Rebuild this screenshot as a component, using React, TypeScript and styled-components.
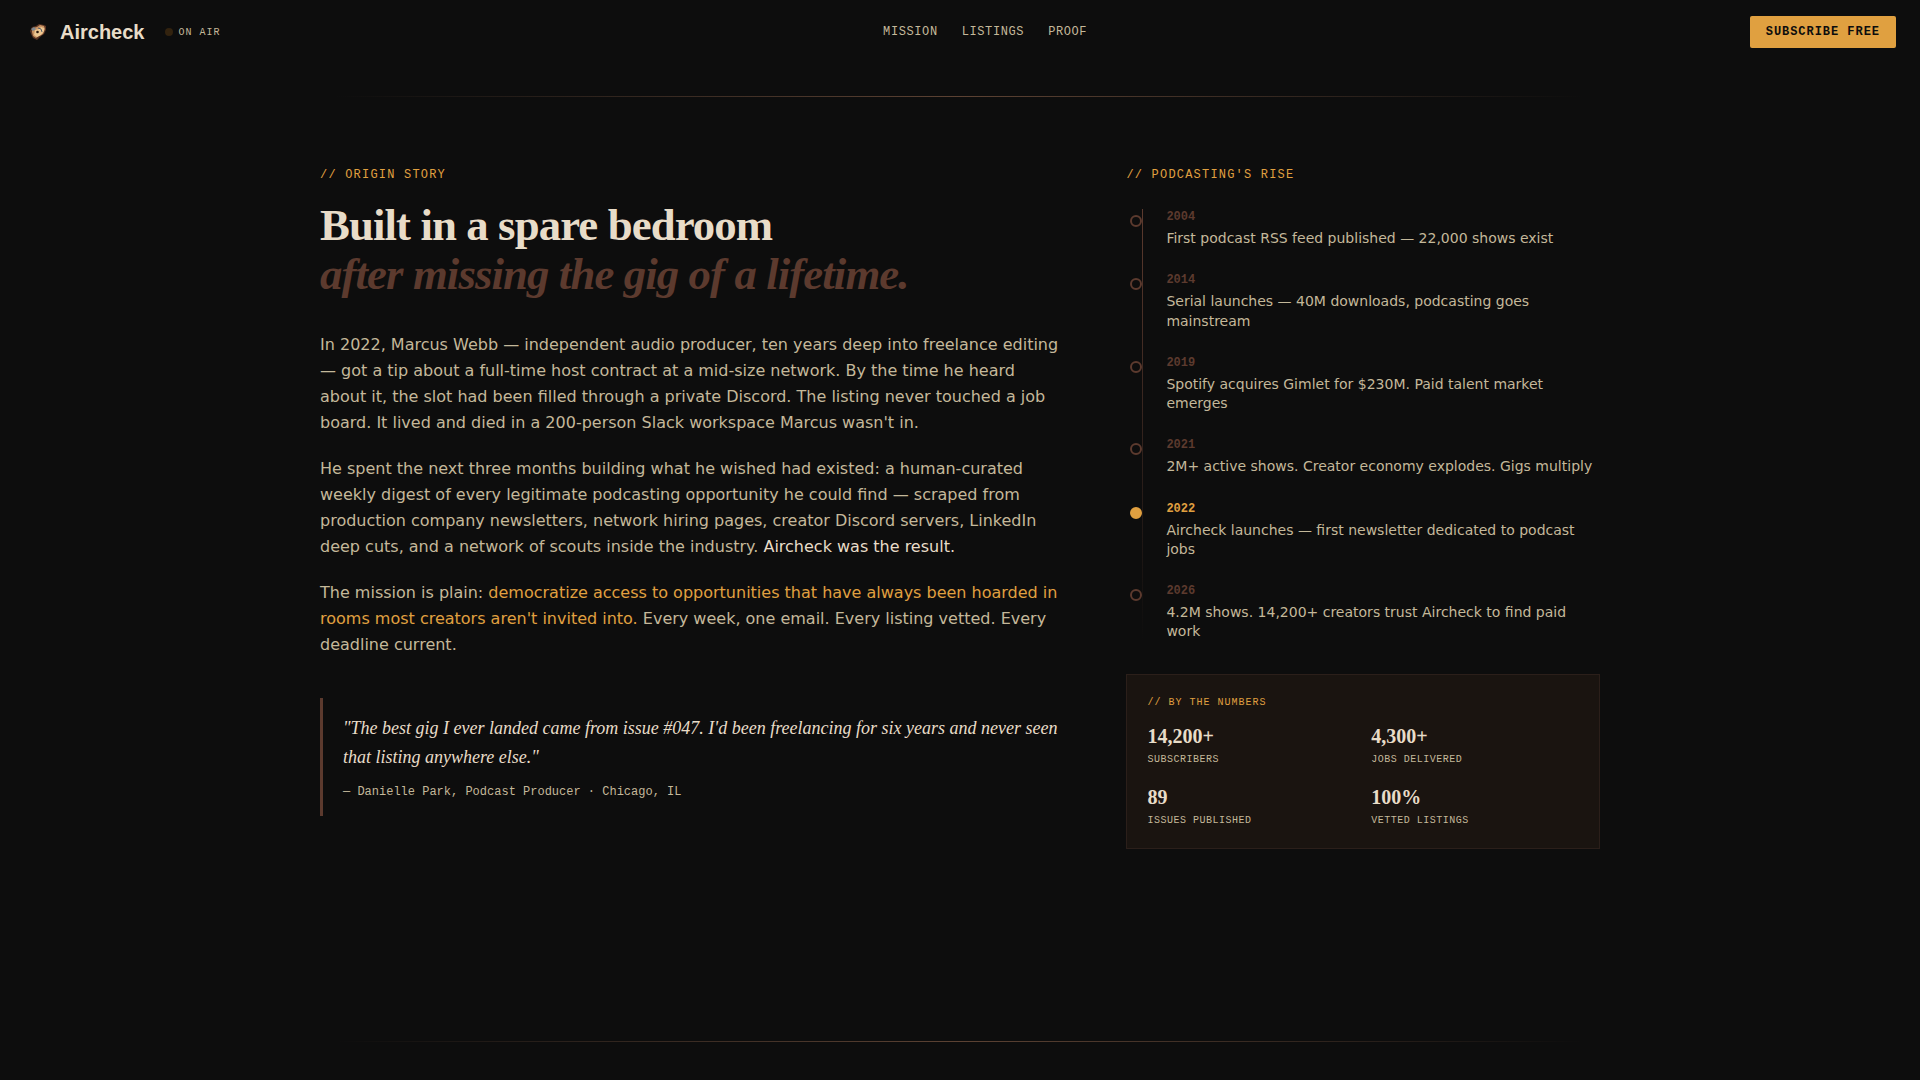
import React from 'react';
import styled, { createGlobalStyle } from 'styled-components';

const mono = `'Liberation Mono', monospace`;
const serif = `'Liberation Serif', serif`;
const sans = `'DejaVu Sans', sans-serif`;

const cream = '#e8dcc8';
const sand = '#c4b89a';
const amber = '#e0a040';
const brown = '#5c3a2e';

const GlobalStyle = createGlobalStyle`
  * {
    box-sizing: border-box;
    margin: 0;
    padding: 0;
  }
  body {
    background: #0d0d0d;
    color: ${sand};
    font-family: ${sans};
    font-size: 16px;
    line-height: 1.5;
    overflow: hidden;
  }
`;

const Page = styled.div`
  height: 1080px;
  overflow: hidden;
`;

const Header = styled.header`
  display: flex;
  align-items: center;
  justify-content: space-between;
  height: 64px;
  margin-bottom: 32px;
  padding: 0 24px;
`;

const Brand = styled.div`
  display: flex;
  align-items: center;
`;

const Logo = styled.svg`
  width: 28px;
  height: 28px;
  margin-right: 8px;
`;

const BrandName = styled.span`
  color: ${cream};
  font: bold 20px/28px 'Liberation Sans', sans-serif;
`;

const OnAir = styled.span`
  display: flex;
  align-items: center;
  gap: 6px;
  margin-left: 20px;
  font: 10px/15px ${mono};
  letter-spacing: 0.1em;
`;

const Dot = styled.i`
  width: 8px;
  height: 8px;
  border-radius: 50%;
  background: #33230f;
`;

const Nav = styled.nav`
  display: flex;
  gap: 24px;
`;

const NavLink = styled.a`
  color: ${sand};
  font: 12px/16px ${mono};
  letter-spacing: 0.05em;
`;

const Subscribe = styled.button`
  padding: 8px 16px;
  border: 0;
  border-radius: 2px;
  background: ${amber};
  color: #0d0d0d;
  font: bold 12px/16px ${mono};
  letter-spacing: 0.08em;
`;

const Divider = styled.hr`
  width: 1248px;
  height: 1px;
  margin: 0 auto;
  border: 0;
  background: linear-gradient(90deg, transparent, #5c4233, transparent);
`;

const Section = styled.section`
  display: grid;
  grid-template-columns: 742.4px 473.6px;
  gap: 64px;
  width: 1280px;
  height: 944px;
  margin: 0 auto;
  padding-top: 70px;
`;

const Label = styled.p<{ $small?: boolean }>`
  margin-bottom: ${p => (p.$small ? 12 : 18)}px;
  color: ${amber};
  font: ${p => (p.$small ? '10px/15px' : '12px/16px')} ${mono};
  letter-spacing: 0.1em;
`;

const Title = styled.h2`
  margin-bottom: 32.25px;
  color: ${cream};
  font: bold 44.8px/1.1 ${serif};
  letter-spacing: -0.02em;

  em {
    color: ${brown};
  }
`;

const Text = styled.p`
  margin-bottom: 20px;
  line-height: 26px;
`;

const Strong = styled.span<{ $accent?: boolean }>`
  color: ${p => (p.$accent ? amber : cream)};
`;

const Quote = styled.blockquote`
  margin-top: 40px;
  padding: 16px 0 16px 20px;
  border-left: 3px solid ${brown};
`;

const QuoteText = styled.p`
  margin-bottom: 12px;
  color: ${cream};
  font: italic 18px/29.25px ${serif};
`;

const Cite = styled.cite`
  display: block;
  font: normal 12px/16px ${mono};
`;

const Timeline = styled.ul`
  margin-top: 26px;
  list-style: none;
  background: linear-gradient(${brown}, transparent) 16px 0 / 1px 100% no-repeat;
`;

const Item = styled.li`
  display: flex;
  gap: 24px;
  padding: 0 0 24px 4px;

  &:last-child {
    padding-bottom: 0;
  }
`;

const Marker = styled.i<{ $active?: boolean }>`
  flex: none;
  width: 12px;
  height: 12px;
  margin-top: 6px;
  border: 2px solid ${p => (p.$active ? amber : brown)};
  border-radius: 50%;
  background: ${p => (p.$active ? amber : '#0d0d0d')};
`;

const Year = styled.p<{ $active?: boolean }>`
  margin-bottom: 4px;
  color: ${p => (p.$active ? amber : brown)};
  font: bold 12px/16px ${mono};
`;

const Event = styled.p`
  font-size: 14px;
  line-height: 19.25px;
`;

const Card = styled.div`
  margin-top: 32px;
  padding: 20px;
  border: 1px solid #2b1f1a;
  background: #1a1410;
`;

const Stats = styled.div`
  display: grid;
  grid-template-columns: 1fr 1fr;
  gap: 16px;
`;

const StatValue = styled.p`
  color: ${cream};
  font: bold 20px/28px ${serif};
`;

const StatLabel = styled.p`
  margin-top: 2px;
  font: 10px/15px ${mono};
  letter-spacing: 0.05em;
`;

const events = [
  { year: '2004', text: 'First podcast RSS feed published — 22,000 shows exist' },
  { year: '2014', text: 'Serial launches — 40M downloads, podcasting goes mainstream' },
  { year: '2019', text: 'Spotify acquires Gimlet for $230M. Paid talent market emerges' },
  { year: '2021', text: '2M+ active shows. Creator economy explodes. Gigs multiply' },
  { year: '2022', text: 'Aircheck launches — first newsletter dedicated to podcast jobs', active: true },
  { year: '2026', text: '4.2M shows. 14,200+ creators trust Aircheck to find paid work' },
];

const stats = [
  { value: '14,200+', label: 'SUBSCRIBERS' },
  { value: '4,300+', label: 'JOBS DELIVERED' },
  { value: '89', label: 'ISSUES PUBLISHED' },
  { value: '100%', label: 'VETTED LISTINGS' },
];

const App = () => (
  <Page>
    <GlobalStyle />
    <Header>
      <Brand>
        <Logo viewBox="0 0 28 28">
          <path d="M6 13l2-4 4-1 3-2 5 1 2 1v4l-2 4-4 3-3 3-4-2-2-4z" fill="#5a3524" />
          <path d="M8 13l1-3 4-1 3-2 4 1 1 3-2 5-4 2-3 2-3-2-1-4z" fill="#c99362" />
          <path d="M11 12l4-1 2-2 3 1v3l-3 4-4 2-3-2z" fill="#edc792" />
          <path d="M7 11l3-2 2 2-3 2z" fill="#7d8890" />
          <path d="M14 10l3 1 1 3" fill="none" stroke="#566068" />
          <circle cx="13.5" cy="14" r="1.3" fill="#2c1a10" />
        </Logo>
        <BrandName>Aircheck</BrandName>
        <OnAir>
          <Dot />
          ON AIR
        </OnAir>
      </Brand>
      <Nav>
        <NavLink>MISSION</NavLink>
        <NavLink>LISTINGS</NavLink>
        <NavLink>PROOF</NavLink>
      </Nav>
      <Subscribe>SUBSCRIBE FREE</Subscribe>
    </Header>
    <Divider />
    <Section>
      <div>
        <Label>// ORIGIN STORY</Label>
        <Title>
          Built in a spare bedroom
          <br />
          <em>after missing the gig of a lifetime.</em>
        </Title>
        <Text>
          In 2022, Marcus Webb — independent audio producer, ten years deep into freelance editing —
          got a tip about a full-time host contract at a mid-size network. By the time he heard
          about it, the slot had been filled through a private Discord. The listing never touched a
          job board. It lived and died in a 200-person Slack workspace Marcus wasn't in.
        </Text>
        <Text>
          He spent the next three months building what he wished had existed: a human-curated weekly
          digest of every legitimate podcasting opportunity he could find — scraped from production
          company newsletters, network hiring pages, creator Discord servers, LinkedIn deep cuts,
          and a network of scouts inside the industry. <Strong>Aircheck was the result.</Strong>
        </Text>
        <Text>
          The mission is plain:{' '}
          <Strong $accent>
            democratize access to opportunities that have always been hoarded in rooms most creators
            aren't invited into.
          </Strong>{' '}
          Every week, one email. Every listing vetted. Every deadline current.
        </Text>
        <Quote>
          <QuoteText>
            "The best gig I ever landed came from issue #047. I'd been freelancing for six years and
            never seen that listing anywhere else."
          </QuoteText>
          <Cite>— Danielle Park, Podcast Producer · Chicago, IL</Cite>
        </Quote>
      </div>
      <div>
        <Label>// PODCASTING'S RISE</Label>
        <Timeline>
          {events.map(e => (
            <Item key={e.year}>
              <Marker $active={e.active} />
              <div>
                <Year $active={e.active}>{e.year}</Year>
                <Event>{e.text}</Event>
              </div>
            </Item>
          ))}
        </Timeline>
        <Card>
          <Label $small>// BY THE NUMBERS</Label>
          <Stats>
            {stats.map(s => (
              <div key={s.label}>
                <StatValue>{s.value}</StatValue>
                <StatLabel>{s.label}</StatLabel>
              </div>
            ))}
          </Stats>
        </Card>
      </div>
    </Section>
    <Divider />
  </Page>
);

export default App;
